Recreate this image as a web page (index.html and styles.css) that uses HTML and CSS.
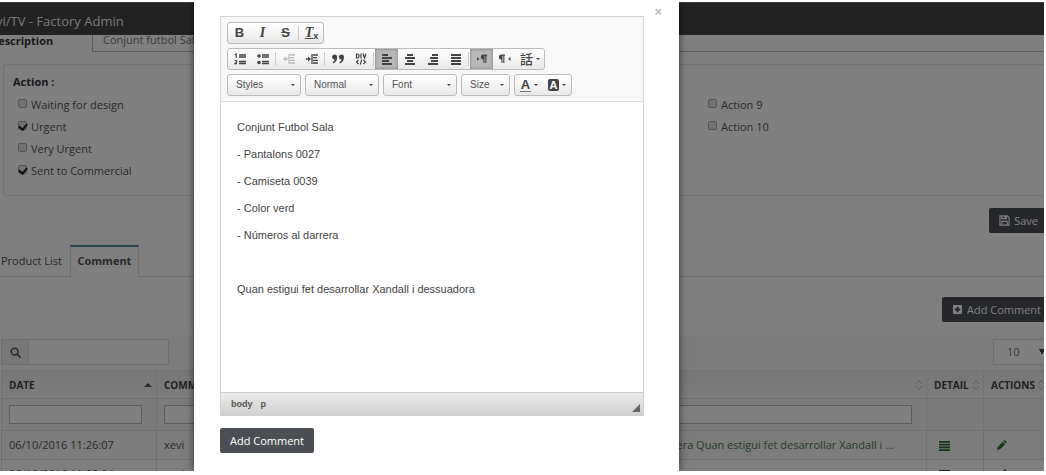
FILE: index.html
```html
<!DOCTYPE html>
<html lang="en">
<head>
<meta charset="utf-8">
<title>Factory Admin</title>
<link rel="stylesheet" href="styles.css">
</head>
<body>
<svg class="defs" aria-hidden="true">
  <symbol id="i-list" viewBox="0 0 12 12"><path d="M0 2h12M0 5h12M0 8h12M0 11h12" stroke="currentColor" stroke-width="2"/></symbol>
  <symbol id="i-pencil" viewBox="0 0 12 12"><path d="M1 11l.8-3.4L7.400 2l2.600 2.600-5.600 5.600zM8.100 1.300l.7-.7q.6-.5 1.200 0l1.400 1.400q.5.600 0 1.200l-.7.7z" fill="currentColor"/></symbol>
  <symbol id="i-sort" viewBox="0 0 8 12"><path d="M1 5l3-3.500L7 5M1 7l3 3.500L7 7" fill="none" stroke="currentColor"/></symbol>
</svg>
<div class="screen">
  <header class="topbar"><span class="brand">vi/TV - Factory Admin</span></header>
  <main class="page">
    <div class="desc-row">
      <label class="desc-label" for="desc">Description</label>
      <textarea class="desc" id="desc">Conjunt futbol Sala</textarea>
    </div>
    <section class="panel">
      <h2 class="panel-title">Action :</h2>
      <div class="checks">
        <div class="check-col">
          <label class="check"><input type="checkbox">Waiting for design</label>
          <label class="check"><input type="checkbox" checked>Urgent</label>
          <label class="check"><input type="checkbox">Very Urgent</label>
          <label class="check"><input type="checkbox" checked>Sent to Commercial</label>
        </div>
        <div class="check-col"></div>
        <div class="check-col">
          <label class="check"><input type="checkbox">Action 9</label>
          <label class="check"><input type="checkbox">Action 10</label>
        </div>
      </div>
    </section>
    <div class="actions save-row">
      <button class="btn" type="button"><svg class="ic" viewBox="0 0 12 12"><path d="M1 1h8l2 2v8H1zM3 1v3h5V1M3 11V7h6v4" fill="none" stroke="currentColor" stroke-width="1.200"/><path d="M6 1h1.500v2.500H6z" fill="currentColor"/></svg>Save</button>
    </div>
    <nav class="tabs">
      <a class="tab" href="#products">Product List</a>
      <a class="tab active" href="#comment">Comment</a>
    </nav>
    <div class="actions add-row">
      <button class="btn" type="button"><svg class="ic" viewBox="0 0 12 12"><path fill-rule="evenodd" d="M2.500 1h7Q11 1 11 2.500v7q0 1.500-1.500 1.500h-7Q1 11 1 9.500v-7Q1 1 2.500 1zM5 3v2H3v2h2v2h2V7h2V5H7V3z" fill="currentColor"/></svg>Add Comment</button>
    </div>
    <div class="tools">
      <label class="addon" for="q" aria-label="Search"><svg class="ic" viewBox="0 0 12 12"><circle cx="5" cy="5" r="3.700" fill="none" stroke="currentColor" stroke-width="1.600"/><path d="M7.700 7.700l3.300 3.300" stroke="currentColor" stroke-width="2" stroke-linecap="round"/></svg></label>
      <input class="search" id="q" type="text">
      <select class="length" aria-label="Rows"><option>10</option></select>
    </div>
    <table class="grid">
      <colgroup><col class="c-date"><col class="c-com"><col><col class="c-detail"><col class="c-act"></colgroup>
      <thead>
        <tr class="heads">
          <th><span class="th sorted">DATE<i class="asc"></i></span></th>
          <th><span class="th">COMMERCIAL</span></th>
          <th><span class="th">COMMENT<svg class="sort"><use href="#i-sort"/></svg></span></th>
          <th><span class="th">DETAIL<svg class="sort"><use href="#i-sort"/></svg></span></th>
          <th><span class="th">ACTIONS<svg class="sort"><use href="#i-sort"/></svg></span></th>
        </tr>
        <tr class="filters">
          <td><input type="text" aria-label="Filter date"></td>
          <td><input type="text" aria-label="Filter commercial"></td>
          <td><input type="text" aria-label="Filter comment"></td>
          <td></td><td></td>
        </tr>
      </thead>
      <tbody>
        <tr>
          <td>06/10/2016 11:26:07</td><td>xevi</td>
          <td><a class="link" href="#c1">Conjunt Futbol Sala - Pantalons 0027 - Camiseta 0039 - Color verd - Números al darrera Quan estigui fet desarrollar Xandall i ...</a></td>
          <td><a class="icon-link" href="#d1" aria-label="Detail"><svg class="ic"><use href="#i-list"/></svg></a></td>
          <td><a class="icon-link" href="#e1" aria-label="Edit"><svg class="ic"><use href="#i-pencil"/></svg></a></td>
        </tr>
        <tr>
          <td>06/10/2016 11:20:04</td><td>xevi</td><td></td>
          <td><a class="icon-link" href="#d2" aria-label="Detail"><svg class="ic"><use href="#i-list"/></svg></a></td>
          <td><a class="icon-link" href="#e2" aria-label="Edit"><svg class="ic"><use href="#i-pencil"/></svg></a></td>
        </tr>
      </tbody>
    </table>
  </main>

  <div class="backdrop">
    <div class="modal" role="dialog" aria-label="Add comment">
      <button class="close" type="button" aria-label="Close">×</button>
      <div class="editor">
        <div class="toolbar">
          <div class="line">
            <div class="group">
              <button class="tool b" type="button">B</button>
              <button class="tool i" type="button">I</button>
              <button class="tool s" type="button">S</button>
              <span class="sep"></span>
              <button class="tool tx" type="button"><span class="tx-t">T</span><sub>x</sub></button>
            </div>
          </div>
          <div class="line">
            <div class="group">
              <button class="tool" type="button" aria-label="Numbered list"><svg class="ti" viewBox="0 0 12 12"><path d="M5 2h7M5 4h7M5 8.500h7M5 10.500h7" stroke="currentColor" stroke-width="1.300"/><path d="M.8 1.700l1.400-.7v4M.7 7.500h2v1.300L1 10.600h2" fill="none" stroke="currentColor" stroke-width="1.200"/></svg></button>
              <button class="tool" type="button" aria-label="Bulleted list"><svg class="ti" viewBox="0 0 12 12"><path d="M5 2h7M5 4h7M5 8.500h7M5 10.500h7" stroke="currentColor" stroke-width="1.400"/><circle cx="2" cy="3" r="1.800" fill="currentColor"/><circle cx="2" cy="9.500" r="1.800" fill="currentColor"/></svg></button>
              <span class="sep"></span>
              <button class="tool" type="button" aria-label="Outdent" disabled><svg class="ti" viewBox="0 0 12 12"><path d="M6 1v10M7 2h5M7 4.700h4M7 7.300h5M7 10h5M1 6h4" stroke="currentColor" stroke-width="1.300"/><path d="M0 6l3-2.500v5z" fill="currentColor"/></svg></button>
              <button class="tool" type="button" aria-label="Indent"><svg class="ti" viewBox="0 0 12 12"><path d="M6 1v10M7 2h5M7 4.700h4M7 7.300h5M7 10h5M0 6h4" stroke="currentColor" stroke-width="1.300"/><path d="M5 6L2 3.500v5z" fill="currentColor"/></svg></button>
              <span class="sep"></span>
              <button class="tool" type="button" aria-label="Quote"><svg class="ti" viewBox="0 0 12 12"><path d="M2.500 1.500a2.500 2.500 0 012.600 2.700C5.100 7.500 3.700 9.500 1 10.500l-.4-1.200C2 8.600 2.600 7.700 2.600 6.500A2.500 2.500 0 012.500 1.500zM9.300 1.500a2.500 2.500 0 012.600 2.700c0 3.300-1.400 5.300-4.100 6.300l-.4-1.200c1.400-.7 2-1.600 2-2.800A2.500 2.500 0 019.300 1.500z" fill="currentColor"/></svg></button>
              <button class="tool" type="button" aria-label="Div container"><svg class="ti" viewBox="0 0 12 12"><path d="M1.500 1v4h1Q4 5 4 3T2.500 1zM6 .5v5M8 .5l1.500 4.500L11 .5M3.500 7L1.500 9l2 2M8.500 7l2 2-2 2M6.800 6.500l-1.500 5" fill="none" stroke="currentColor" stroke-width="1.200"/></svg></button>
              <span class="sep"></span>
              <button class="tool on" type="button" aria-label="Align left"><svg class="ti" viewBox="0 0 12 12"><path d="M1 2h6M1 5h10M1 8h7M1 11h10" stroke="currentColor" stroke-width="2"/></svg></button>
              <button class="tool" type="button" aria-label="Center"><svg class="ti" viewBox="0 0 12 12"><path d="M3 2h6M1 5h10M3 8h6M1 11h10" stroke="currentColor" stroke-width="2"/></svg></button>
              <button class="tool" type="button" aria-label="Align right"><svg class="ti" viewBox="0 0 12 12"><path d="M5 2h6M3 5h8M4 8h7M1 11h10" stroke="currentColor" stroke-width="2"/></svg></button>
              <button class="tool" type="button" aria-label="Justify"><svg class="ti" viewBox="0 0 12 12"><path d="M1 2h10M1 5h10M1 8h10M1 11h10" stroke="currentColor" stroke-width="2"/></svg></button>
              <span class="sep"></span>
              <button class="tool on" type="button" aria-label="Left to right"><svg class="ti" viewBox="0 0 12 12"><path d="M1 4l2.500 2L1 8zM11 1.500v1.200h-.6V10H9.300V2.700h-.8V10H7.400V6.500A2.500 2.500 0 017.400 1.500z" fill="currentColor"/></svg></button>
              <button class="tool" type="button" aria-label="Right to left"><svg class="ti" viewBox="0 0 12 12"><path d="M11.500 4L9 6l2.500 2zM6 1.500v1.200h-.6V10H4.300V2.700h-.8V10H2.400V6.500A2.500 2.500 0 012.400 1.500z" fill="currentColor"/></svg></button>
              <button class="tool wide" type="button"><span class="lang">話</span><i class="caret"></i></button>
            </div>
          </div>
          <div class="line combos">
            <button class="combo" type="button">Styles<i class="caret"></i></button>
            <button class="combo" type="button">Normal<i class="caret"></i></button>
            <button class="combo" type="button">Font<i class="caret"></i></button>
            <button class="combo small" type="button">Size<i class="caret"></i></button>
            <div class="group">
              <button class="tool wide" type="button"><span class="fg">A</span><i class="caret"></i></button>
              <button class="tool wide" type="button"><span class="bg">A</span><i class="caret"></i></button>
            </div>
          </div>
        </div>
        <div class="content" contenteditable="true" spellcheck="false">
          <p>Conjunt Futbol Sala</p>
          <p>- Pantalons 0027</p>
          <p>- Camiseta 0039</p>
          <p>- Color verd</p>
          <p>- Números al darrera</p>
          <p>&nbsp;</p>
          <p>Quan estigui fet desarrollar Xandall i dessuadora</p>
        </div>
        <div class="status"><span>body</span><span>p</span><i class="grip"></i></div>
      </div>
      <button class="btn submit" type="button">Add Comment</button>
    </div>
  </div>
</div>
</body>
</html>
```
FILE: styles.css
```css
* { box-sizing: border-box; }
body {
  margin: 0;
  padding: 2px 2px 4px 0;
  height: 100vh;
  background: #fff;
  color: #555;
  font: 11px/16px "Open Sans", "Noto Sans", sans-serif;
}
button, input, select, textarea { font: inherit; color: inherit; margin: 0; }
a { color: inherit; text-decoration: none; }
.defs { display: none; }
.screen { position: relative; height: 100%; overflow: hidden; background: #fff; }

.topbar {
  height: 33px;
  display: flex;
  align-items: center;
  background: #444;
  color: #eee;
  font-size: 13px;
  border-top: 1px solid #777;
}
.brand { margin-left: -4px; padding-top: 4px; white-space: nowrap; }

.page { margin-right: -5px; }
.desc-row { display: flex; margin-right: 4px; }
.desc-label { width: 102px; margin-left: -10px; line-height: 12px; font-weight: 700; color: #333; }
.desc {
  flex: 1;
  height: 17px;
  padding: 0 10px;
  line-height: 10px;
  border: 1px solid #bbb;
  border-top: 0;
  background: #fff;
  overflow: hidden;
  resize: none;
  color: #777;
}
.panel {
  height: 132px;
  margin: 12px 0 0 3px;
  padding: 9px 0 9px 9px;
  border: 1px solid #e5e5e5;
  border-radius: 3px;
}
.panel-title { margin: 0 0 4px; font-size: 11px; line-height: 16px; color: #333; }
.checks { display: grid; grid-template-columns: repeat(3, 1fr); }
.check-col { display: flex; flex-direction: column; padding-left: 5px; }
.check { display: flex; align-items: center; gap: 4px; height: 22px; line-height: 22px; }
.check input {
  appearance: none;
  width: 9px;
  height: 9px;
  margin-bottom: 4px;
  border: 1px solid #aaa;
  border-radius: 2px;
  background: #e4e4e4;
  display: flex;
  align-items: flex-start;
  justify-content: center;
}
.check input:checked::before {
  content: "";
  width: 4px;
  height: 6px;
  border: solid #222;
  border-width: 0 2px 2px 0;
  transform: rotate(40deg);
}

.actions { display: flex; justify-content: flex-end; }
.save-row { padding: 12px 1px 0 0; }
.add-row { padding: 20px 0 13px; margin-right: -2px; }
.btn {
  display: flex;
  align-items: center;
  gap: 4px;
  height: 25px;
  padding: 0 10px;
  border: 0;
  border-radius: 2px;
  background: #4b4f54;
  color: #fff;
  white-space: nowrap;
}
.ic { width: 11px; height: 11px; display: block; }

.tabs { display: flex; margin-top: 12px; border-bottom: 1px solid #ddd; }
.tab { height: 32px; margin-bottom: -1px; padding: 6px 7px 0 1px; border-top: 2px solid transparent; }
.tab.active {
  width: 69px;
  padding: 6px 0 0;
  margin-left: 1px;
  text-align: center;
  font-weight: 700;
  background: #fff;
  border: solid #ddd;
  border-width: 2px 1px 0;
  border-top-color: #5b8f9f;
}

.tools { display: flex; margin-left: 1px; padding: 4px 0 5px; background: #f8f8f8; }
.addon { display: grid; place-items: center; width: 27px; border: 1px solid #ddd; border-right: 0; background: #eee; }
.search { width: 141px; height: 26px; border: 1px solid #ddd; background: #fff; }
.length {
  width: 56px;
  height: 26px;
  margin-left: auto;
  padding: 0 13px;
  border: 1px solid #ddd;
  border-radius: 0;
  color: #777;
  appearance: none;
  background: conic-gradient(from 333deg at 50% 100%, #444 54deg, transparent 0) no-repeat right 3px center / 6px 6px, #fff;
}

.grid { width: calc(100% - 1px); margin-left: 1px; table-layout: fixed; border-collapse: collapse; border-top: 1px solid #ccc; }
.c-date { width: 155px; }
.c-com { width: 84px; }
.c-detail { width: 57px; }
.c-act { width: 65px; }
.grid th, .grid td { padding: 0 7px; text-align: left; border: 1px solid #e2e2e2; white-space: nowrap; }
.heads { height: 28px; background: linear-gradient(#ededed, #fafafa); color: #444; font-size: 10px; }
.th { display: flex; align-items: center; justify-content: space-between; margin-right: -4px; }
.sort { width: 8px; height: 12px; color: #bbb; }
.asc { margin-right: 1px; border: 4px solid transparent; border-top: 0; border-bottom-color: #555; }
.filters { height: 32px; background: #f6f6f6; }
.filters input { display: block; width: 100%; height: 19px; border: 1px solid #bbb; background: #fff; }
.grid .filters td { padding-right: 14px; }
.grid tbody tr { height: 29px; background: #f9f9f9; }
.grid tbody tr + tr { background: #fff; }
.link { color: #4e7a4e; }
.icon-link { display: block; padding-left: 5px; color: #2c6b2c; }

.backdrop { position: absolute; inset: 0; background: rgba(0, 0, 0, .5); display: flex; padding-left: 194px; }
.modal {
  position: relative;
  width: 485px;
  padding: 14px 35px 0 26px;
  background: #fff;
  box-shadow: 0 0 8px rgba(0, 0, 0, .6);
}
.close { position: absolute; top: 2px; right: 17px; padding: 0; border: 0; background: none; color: #bbb; font: 700 13px/16px "Liberation Sans", sans-serif; }
.editor { border: 1px solid #d1d1d1; font-family: "Liberation Sans", sans-serif; }
.toolbar { display: grid; gap: 4px; padding: 5px 6px; background: #f8f8f8; border-bottom: 1px solid #ddd; }
.line { display: flex; }
.combos { gap: 4px; }
.group, .combo {
  display: flex;
  height: 22px;
  border: 1px solid #bbb;
  border-radius: 3px;
  background: linear-gradient(#fff, #e9e9e9);
}
.tool {
  display: grid;
  place-items: center;
  width: 23px;
  height: 20px;
  padding: 0;
  border: 0;
  background: none;
  color: #444;
  font-size: 13px;
}
.tool:disabled { color: #bbb; }
.tool.on { background: #b8b8b8; box-shadow: inset 0 0 3px #777; }
.tool.b { font-weight: 700; }
.tool.i { font: italic 700 14px "Liberation Serif", serif; }
.tool.s { font-weight: 700; text-decoration: line-through; }
.tool.tx { display: flex; align-items: center; justify-content: center; font: italic 700 14px/18px "Liberation Serif", serif; }
.tx-t { text-decoration: underline; }
.tx sub { font: 700 9px/9px "Liberation Sans", sans-serif; align-self: flex-end; padding-bottom: 2px; }
.ti { width: 12px; height: 12px; }
.sep { width: 1px; margin: 3px 1px; background: #ccc; }
.tool.wide { display: flex; align-items: center; justify-content: center; gap: 3px; width: 28px; }
.caret { border: 2px solid transparent; border-top-color: #444; border-bottom: 0; }
.lang { font: 500 13px/18px "Noto Sans CJK TC", sans-serif; }
.combo { width: 74px; align-items: center; justify-content: space-between; padding: 0 5px 0 8px; color: #555; font-size: 10px; }
.combo.small { width: 49px; }
.fg { font-weight: 700; line-height: 12px; border-bottom: 1px solid #777; padding: 0 1px; }
.bg { font-weight: 700; font-size: 11px; line-height: 12px; padding: 0 2px; border-radius: 2px; background: #444; color: #fff; }
.content { height: 290px; padding: 17px 16px; color: #444; outline: 0; }
.content p { margin: 0 0 10px; line-height: 17px; }
.status {
  display: flex;
  align-items: center;
  gap: 8px;
  height: 23px;
  padding: 0 3px 0 10px;
  border-top: 1px solid #ccc;
  background: linear-gradient(#ebebeb, #cfd1cf);
  color: #555;
  font-size: 9px;
  font-weight: 700;
}
.grip { align-self: flex-end; margin: 0 0 3px auto; border: 4px solid; border-color: transparent #666 #666 transparent; }
.submit { margin-top: 12px; }
```
